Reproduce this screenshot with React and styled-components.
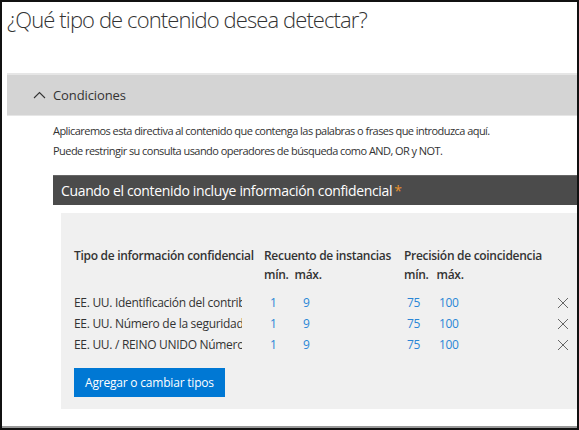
import React from 'react'
import styled, { createGlobalStyle } from 'styled-components'

const GlobalStyle = createGlobalStyle`
  html, body { margin: 0; padding: 0; background: #fff; }
  body { font-family: "Open Sans", "Noto Sans", sans-serif; color: #333; }
`

const rows = [
  { name: 'EE. UU. Identificación del contribuyente', min: 1, max: 9, pmin: 75, pmax: 100 },
  { name: 'EE. UU. Número de la seguridad social', min: 1, max: 9, pmin: 75, pmax: 100 },
  { name: 'EE. UU. / REINO UNIDO Número de pasaporte', min: 1, max: 9, pmin: 75, pmax: 100 },
]

function CloseIcon() {
  return (
    <svg width="12" height="12" viewBox="0 0 12 12">
      <path d="M1 1 L11 11 M11 1 L1 11" stroke="#666" strokeWidth="1" fill="none" />
    </svg>
  )
}

function ChevronUp() {
  return (
    <svg width="13" height="8" viewBox="0 0 13 8">
      <path d="M1 7 L6.5 1.5 L12 7" stroke="#333" strokeWidth="1.1" fill="none" />
    </svg>
  )
}

export default function App() {
  return (
    <Frame>
      <GlobalStyle />
      <Title>¿Qué tipo de contenido desea detectar?</Title>
      <SectionHeader>
        <ChevronUp />
        <span>Condiciones</span>
      </SectionHeader>
      <Body>
        <Description>
          Aplicaremos esta directiva al contenido que contenga las palabras o frases que introduzca aquí.
          <br />
          Puede restringir su consulta usando operadores de búsqueda como AND, OR y NOT.
        </Description>
        <DarkBar>
          Cuando el contenido incluye información confidencial<Star>*</Star>
        </DarkBar>
        <Panel>
          <Table>
            <HeadRow>
              <NameCell>Tipo de información confidencial</NameCell>
              <Group>
                <div>Recuento de instancias</div>
                <SubHead><span>mín.</span><span>máx.</span></SubHead>
              </Group>
              <Group>
                <div>Precisión de coincidencia</div>
                <SubHead $wide><span>mín.</span><span>máx.</span></SubHead>
              </Group>
            </HeadRow>
            {rows.map((r) => (
              <DataRow key={r.name}>
                <NameCell $data><Clip>{r.name}</Clip></NameCell>
                <Nums $pad={6}>
                  <Num $w={33}>{r.min}</Num>
                  <Num>{r.max}</Num>
                </Nums>
                <Nums $pad={3}>
                  <Num $w={32}>{r.pmin}</Num>
                  <Num>{r.pmax}</Num>
                </Nums>
                <Remove><CloseIcon /></Remove>
              </DataRow>
            ))}
          </Table>
          <Button>Agregar o cambiar tipos</Button>
        </Panel>
      </Body>
      <Divider />
    </Frame>
  )
}

const Frame = styled.div`
  box-sizing: border-box;
  width: 579px;
  height: 430px;
  border: 2px solid #111;
  display: flex;
  flex-direction: column;
  overflow: hidden;
`

const Title = styled.h1`
  margin: 0;
  padding: 2px 0 0 5px;
  height: 71px;
  box-sizing: border-box;
  font-family: "Open Sans", sans-serif;
  font-weight: 300;
  font-size: 22px;
  color: #333;
  letter-spacing: -0.9px;
`

const SectionHeader = styled.div`
  margin-left: 5px;
  height: 40px;
  background: #d4d4d4;
  border-top: 2px solid #e6e6e6;
  border-bottom: 1px solid #e6e6e6;
  display: flex;
  align-items: center;
  gap: 7px;
  padding-left: 26px;
  font-size: 13px;
  letter-spacing: -0.1px;
  color: #333;
  svg { margin-top: -1px; }
`

const Body = styled.div`
  padding-left: 51px;
  flex: 1;
`

const Description = styled.p`
  margin: 5px 0 0;
  font-size: 11px;
  line-height: 20px;
  color: #333;
  letter-spacing: -0.55px;
`

const DarkBar = styled.div`
  margin-top: 14px;
  height: 29px;
  background: #4b4b4b;
  border-top: 1px solid #666;
  color: #fff;
  font-size: 14px;
  display: flex;
  align-items: center;
  padding-left: 8px;
  letter-spacing: -0.35px;
`

const Star = styled.span`
  color: #e8912d;
  margin-left: 2px;
`

const Panel = styled.div`
  margin: 8px 0 0 8px;
  height: 196px;
  background: #f0f0f0;
  padding: 33px 0 0 13px;
  box-sizing: border-box;
`

const Table = styled.div`
  display: flex;
  flex-direction: column;
`

const HeadRow = styled.div`
  display: flex;
  font-size: 12px;
  font-weight: 600;
  color: #333;
  line-height: 19px;
  letter-spacing: -0.3px;
  margin-bottom: 8px;
`

const NameCell = styled.div`
  width: 190px;
  flex-shrink: 0;
  white-space: nowrap;
  ${(p) => p.$data && `
    width: 168px;
    margin-right: 22px;
    font-weight: 400;
    overflow: hidden;
  `}
`

const Clip = styled.span`
  display: block;
  width: 168px;
  overflow: hidden;
`

const Group = styled.div`
  width: 140px;
  flex-shrink: 0;
`

const SubHead = styled.div`
  display: flex;
  gap: ${(p) => (p.$wide ? '8px' : '6px')};
`

const DataRow = styled.div`
  display: flex;
  align-items: center;
  height: 21px;
  font-size: 12px;
  color: #333;
  letter-spacing: -0.3px;
`

const Nums = styled.div`
  width: 140px;
  flex-shrink: 0;
  display: flex;
  padding-left: ${(p) => p.$pad}px;
  box-sizing: border-box;
  color: #2a86d6;
`

const Num = styled.span`
  width: ${(p) => (p.$w ? `${p.$w}px` : 'auto')};
`

const Remove = styled.span`
  margin-left: auto;
  margin-right: 8px;
  display: flex;
`

const Button = styled.button`
  margin-top: 13px;
  height: 29px;
  padding: 0 11px;
  background: #0078d4;
  color: #fff;
  border: none;
  font-family: "Open Sans", sans-serif;
  font-size: 12px;
  letter-spacing: -0.2px;
`

const Divider = styled.div`
  height: 2px;
  background: #999;
  margin-top: auto;
`
